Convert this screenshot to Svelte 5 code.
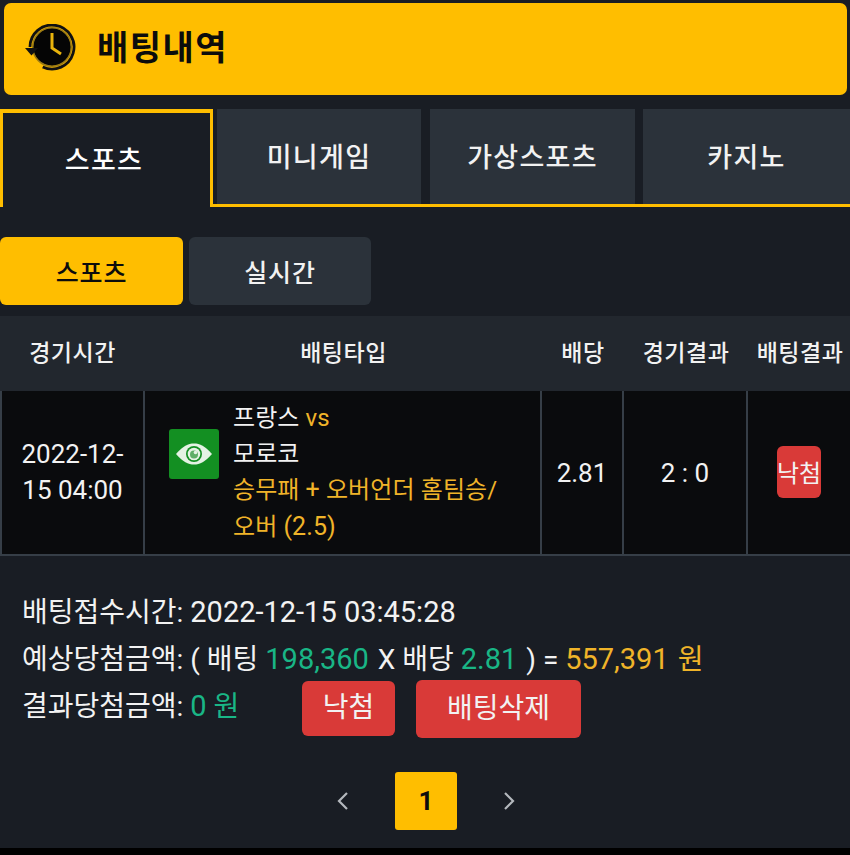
<script>
  let tabs = ['스포츠', '미니게임', '가상스포츠', '카지노'];
  let subTabs = ['스포츠', '실시간'];
  let columns = ['경기시간', '배팅타입', '배당', '경기결과', '배팅결과'];
</script>

<div class="page">
  <div class="title-card">
    <svg class="clock" width="54" height="50" viewBox="0 0 54 50">
      <circle cx="27" cy="23" r="19" fill="#050505" />
      <circle cx="27" cy="23" r="19.300" fill="none" stroke="#9a7a14" stroke-width="1.500" />
      <path d="M5 23A22 22 0 1 1 17.700 43" fill="none" stroke="#111" stroke-width="2.800" />
      <path d="M0 24h13l-6.500 7.500z" fill="#111" />
      <path d="M27 9v15l9 6" fill="none" stroke="#e8b30c" stroke-width="3" />
    </svg>
    <h1>배팅내역</h1>
  </div>

  <div class="tabs">
    {#each tabs as tab, i}
      <div class="tab" class:active={i === 0}>{tab}</div>
    {/each}
  </div>

  <div class="sub-tabs">
    {#each subTabs as tab, i}
      <div class="sub-tab" class:active={i === 0}>{tab}</div>
    {/each}
  </div>

  <div class="table">
    <div class="row head">
      {#each columns as col}
        <div class="cell">{col}</div>
      {/each}
    </div>
    <div class="row body">
      <div class="cell date">2022-12-<br />15 04:00</div>
      <div class="cell type">
        <div class="eye">
          <svg width="36" height="22" viewBox="0 0 36 22">
            <path d="M0 11C7 3 12 .5 18 .5S29 3 36 11c-7 8-12 10.500-18 10.500S7 19 0 11z" fill="#e4f2e4" />
            <circle cx="18" cy="11" r="8" fill="#138f22" />
            <circle cx="18" cy="11" r="6.300" fill="#e4f2e4" />
            <circle cx="18" cy="11.500" r="4" fill="#5fae68" />
            <circle cx="19.500" cy="9.500" r="1.800" fill="#e4f2e4" />
          </svg>
        </div>
        <div class="match">
          <div>프랑스 <span class="gold">vs</span></div>
          <div>모로코</div>
          <div class="gold">승무패 <span class="n">+</span> 오버언더 홈팀승/<br />오버 <span class="n">(2.5)</span></div>
        </div>
      </div>
      <div class="cell num">2.81</div>
      <div class="cell num">2 : 0</div>
      <div class="cell"><span class="lost">낙첨</span></div>
    </div>
  </div>

  <div class="summary">
    <div class="line">배팅접수시간: <span class="n">2022-12-15 03:45:28</span></div>
    <div class="line second">
      예상당첨금액: ( 배팅 <span class="n green">198,360</span> X 배당 <span class="n green">2.81</span> ) = <span class="n gold">557,391</span> <span class="gold">원</span>
    </div>
    <div class="line result">
      <div class="amount">결과당첨금액: <span class="n green">0</span> <span class="green">원</span></div>
      <div class="btn small">낙첨</div>
      <div class="btn wide">배팅삭제</div>
    </div>
  </div>

  <div class="pager">
    <svg width="14" height="20" viewBox="0 0 14 20"><path d="M11 2L3 10l8 8" fill="none" stroke="#b4b8bd" stroke-width="2.200" /></svg>
    <div class="page-num">1</div>
    <svg width="14" height="20" viewBox="0 0 14 20"><path d="M3 2l8 8-8 8" fill="none" stroke="#b4b8bd" stroke-width="2.200" /></svg>
  </div>
</div>

<style>
  :global(body) {
    margin: 0;
    background: #000;
  }
  .page {
    width: 850px;
    height: 848px;
    overflow: hidden;
    box-sizing: border-box;
    padding-top: 3px;
    background: #191d24;
    color: #f2f2f2;
    font-family: Roboto, "Noto Sans CJK KR", sans-serif;
    font-size: 24px;
  }
  .title-card {
    height: 92px;
    margin: 0 3px 14px 4px;
    padding-left: 21px;
    display: flex;
    align-items: center;
    gap: 18px;
    background: #ffbe00;
    border-radius: 7px;
    color: #0c0c0c;
  }
  .clock {
    flex: none;
  }
  h1 {
    margin: 0 0 7px;
    font-size: 34px;
    font-weight: 700;
    letter-spacing: 1.500px;
  }
  .tabs {
    box-sizing: border-box;
    height: 98px;
    display: flex;
    gap: 8px;
    border-bottom: 3px solid #ffbe00;
  }
  .tab {
    width: 204px;
    display: flex;
    align-items: center;
    justify-content: center;
    padding-bottom: 2px;
    font-size: 27px;
    font-weight: 500;
    letter-spacing: 1.300px;
    background: #2b323a;
  }
  .tab:nth-child(2) {
    margin-right: 1px;
  }
  .tab:nth-child(3) {
    width: 205px;
  }
  .tab:nth-child(4) {
    width: 207px;
  }
  .tab.active {
    box-sizing: border-box;
    width: 213px;
    height: 98px;
    margin-right: -4px;
    padding: 0 5px 3px 0;
    background: #191d24;
    border: solid #ffbe00;
    border-width: 4px 3px 0 3px;
    color: #fff;
  }
  .sub-tabs {
    display: flex;
    gap: 6px;
    margin-top: 30px;
  }
  .sub-tab {
    width: 182px;
    height: 68px;
    display: flex;
    align-items: center;
    justify-content: center;
    background: #2b323a;
    border-radius: 6px;
    font-size: 25px;
    font-weight: 500;
    letter-spacing: 0.800px;
  }
  .sub-tab.active {
    width: 183px;
    background: #ffbe00;
    color: #0c0c0c;
  }
  .table {
    margin-top: 11px;
  }
  .row {
    display: grid;
    grid-template-columns: 145px 397px 82px 124px 102px;
  }
  .head {
    height: 75px;
    background: #22272e;
    font-size: 23px;
    font-weight: 500;
    letter-spacing: 0.500px;
  }
  .cell {
    display: flex;
    align-items: center;
    justify-content: center;
    white-space: nowrap;
    padding-bottom: 6px;
  }
  .head .cell:last-child {
    padding-left: 2px;
  }
  .body {
    height: 165px;
    box-sizing: border-box;
    background: #0a0b0d;
    border-bottom: 2px solid #363e47;
  }
  .body .cell {
    border-right: 2px solid #363e47;
    padding-bottom: 0;
  }
  .body .cell:first-child {
    border-left: 2px solid #363e47;
  }
  .body .cell:last-child {
    border-right: 0;
  }
  .body .date {
    padding-bottom: 2px;
    line-height: 36px;
    text-align: center;
    font-size: 26px;
  }
  .num {
    font-size: 26px;
  }
  .body .type {
    justify-content: flex-start;
    align-items: flex-start;
    padding: 10px 0 0 24px;
    gap: 14px;
  }
  .eye {
    width: 50px;
    height: 50px;
    margin-top: 28px;
    display: flex;
    align-items: center;
    justify-content: center;
    background: #138f22;
    border-radius: 3px;
  }
  .match {
    line-height: 35.700px;
    white-space: nowrap;
    letter-spacing: 0.100px;
  }
  .match .n {
    font-size: 25px;
  }
  .gold {
    color: #f0b429;
  }
  .green {
    color: #19b686;
  }
  .lost {
    width: 44px;
    height: 52px;
    margin-bottom: 2px;
    display: flex;
    align-items: center;
    justify-content: center;
    background: #d93a38;
    border-radius: 6px;
  }
  .summary {
    padding: 33px 0 0 22px;
    font-size: 28px;
  }
  .summary .n {
    font-size: 29px;
  }
  .second .n {
    margin-right: 2px;
  }
  .line {
    height: 47px;
    line-height: 47px;
    white-space: pre;
  }
  .line.result {
    display: flex;
    align-items: flex-start;
    margin-top: 1px;
  }
  .amount {
    width: 280px;
    margin-top: -1px;
  }
  .btn {
    display: flex;
    align-items: center;
    justify-content: center;
    padding-bottom: 2px;
    box-sizing: border-box;
    background: #d93a38;
    border-radius: 6px;
  }
  .small {
    width: 93px;
    height: 55px;
    margin: -3px 21px 0 0;
  }
  .wide {
    width: 165px;
    height: 58px;
    margin-top: -4px;
  }
  .pager {
    margin-top: 41px;
    display: flex;
    align-items: center;
    justify-content: center;
    gap: 45px;
    padding-left: 2px;
  }
  .page-num {
    width: 62px;
    height: 58px;
    display: flex;
    align-items: center;
    justify-content: center;
    background: #ffbe00;
    border-radius: 3px;
    color: #0c0c0c;
    font-weight: 700;
    font-size: 26px;
  }
</style>
